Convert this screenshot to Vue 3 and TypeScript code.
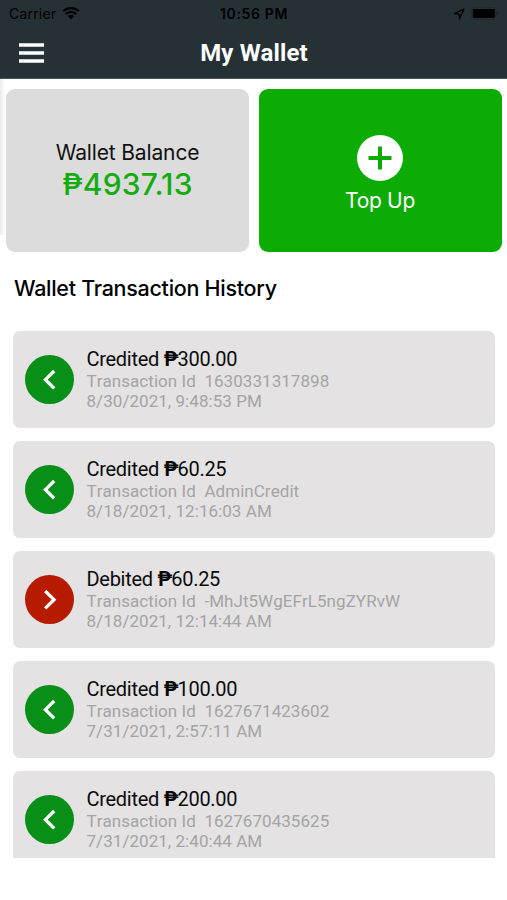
<script setup lang="ts">
type Kind = 'Credited' | 'Debited'

interface Transaction {
  kind: Kind
  amount: string
  id: string
  date: string
}

const balance = '4937.13'

const transactions: Transaction[] = [
  { kind: 'Credited', amount: '300.00', id: '1630331317898', date: '8/30/2021, 9:48:53 PM' },
  { kind: 'Credited', amount: '60.25', id: 'AdminCredit', date: '8/18/2021, 12:16:03 AM' },
  { kind: 'Debited', amount: '60.25', id: '-MhJt5WgEFrL5ngZYRvW', date: '8/18/2021, 12:14:44 AM' },
  { kind: 'Credited', amount: '100.00', id: '1627671423602', date: '7/31/2021, 2:57:11 AM' },
  { kind: 'Credited', amount: '200.00', id: '1627670435625', date: '7/31/2021, 2:40:44 AM' },
]
</script>

<template>
  <div class="screen">
    <header class="header">
      <div class="status">
        <div class="status-left">
          <span class="carrier">Carrier</span>
          <svg class="wifi" width="18" height="14" viewBox="0 0 18 14">
            <path d="M1.2 5.2A11.2 11.2 0 0 1 16.8 5.2M3.9 8.1A7.3 7.3 0 0 1 14.1 8.1" fill="none" stroke="#000" stroke-width="2.2" />
            <path d="M5.9 10.1A4.5 4.5 0 0 1 12.1 10.1L9 13.3Z" fill="#000" />
          </svg>
        </div>
        <span class="clock">10:56 PM</span>
        <div class="status-right">
          <svg width="12" height="12" viewBox="0 0 12 12">
            <path d="M10.9 1.1L1.3 5.6L6 6.1L6.5 10.8Z" fill="none" stroke="#000" stroke-width="1.4" stroke-linejoin="round" />
          </svg>
          <svg width="28" height="13" viewBox="0 0 28 13">
            <rect x="0.5" y="0.5" width="24.5" height="12" rx="3.2" fill="none" stroke="#1f292d" />
            <rect x="1.8" y="2" width="22" height="9" rx="1.6" fill="#000" />
            <path d="M26 4.5Q28 6.5 26 8.5Z" fill="#172024" />
          </svg>
        </div>
      </div>
      <div class="nav">
        <svg class="menu" width="25" height="20" viewBox="0 0 25 20">
          <path d="M0 2H25M0 10H25M0 18H25" stroke="#fff" stroke-width="3.6" />
        </svg>
        <h1 class="title">My Wallet</h1>
      </div>
    </header>

    <section class="cards">
      <div class="card balance">
        <span class="balance-label">Wallet Balance</span>
        <span class="balance-value">₱{{ balance }}</span>
      </div>
      <div class="card topup">
        <svg width="46" height="46" viewBox="0 0 46 46">
          <circle cx="23" cy="23" r="23" fill="#fff" />
          <path d="M23 11.5V34.5M11.5 23H34.5" stroke="#0dac04" stroke-width="4" />
        </svg>
        <span class="topup-label">Top Up</span>
      </div>
    </section>

    <h2 class="heading">Wallet Transaction History</h2>

    <ul class="list">
      <li v-for="tx in transactions" :key="tx.id" class="row">
        <svg class="badge" :class="{ debit: tx.kind === 'Debited' }" width="49" height="49" viewBox="0 0 49 49">
          <circle cx="24.5" cy="24.5" r="24.5" />
          <path v-if="tx.kind === 'Credited'" d="M29.2 16L20.4 24.7L29.2 33.4" />
          <path v-else d="M20.2 16L29 24.7L20.2 33.4" />
        </svg>
        <div class="details">
          <span class="amount">{{ tx.kind }} <span class="peso">₱</span>{{ tx.amount }}</span>
          <span class="meta">Transaction Id&nbsp; {{ tx.id }}</span>
          <span class="meta">{{ tx.date }}</span>
        </div>
      </li>
    </ul>
  </div>
</template>

<style>
body {
  margin: 0;
  background: #fff;
}
</style>

<style scoped>
.screen {
  width: 507px;
  height: 900px;
  overflow: hidden;
  background: #fff;
  display: flex;
  flex-direction: column;
  font-family: Roboto, "Liberation Sans", sans-serif;
}
.header {
  box-sizing: border-box;
  height: 79px;
  flex: none;
  background: #263136;
  border-bottom: 1px solid #465155;
}
.status {
  display: grid;
  grid-template-columns: 1fr auto 1fr;
  align-items: center;
  height: 27px;
  padding: 0 8px 0 9px;
  font: 14px/27px Inter, "Liberation Sans", sans-serif;
  color: #000;
}
.status-left,
.status-right {
  display: flex;
  align-items: center;
}
.status-left {
  gap: 6px;
}
.carrier {
  letter-spacing: 0.2px;
}
.wifi {
  margin-top: -2px;
}
.status-right {
  justify-content: flex-end;
  gap: 6px;
}
.clock {
  font-weight: 600;
  letter-spacing: 0.65px;
}
.nav {
  display: grid;
  grid-template-columns: 25px 1fr 25px;
  align-items: center;
  height: 51px;
  padding: 0 19px;
}
.title {
  margin: 0;
  padding: 2px 0 0 1px;
  font-size: 24px;
  line-height: 49px;
  font-weight: 700;
  letter-spacing: 0.15px;
  text-align: center;
  color: #fff;
}
.cards {
  display: grid;
  grid-template-columns: 1fr 1fr;
  gap: 10px;
  height: 163px;
  padding: 10px 5px 0 6px;
  flex: none;
  background: linear-gradient(to right, #e9eaea, #fff) 0 0 / 5px 156px no-repeat;
}
.card {
  border-radius: 9px;
  display: flex;
  flex-direction: column;
  align-items: center;
  justify-content: center;
  font-family: Inter, "Liberation Sans", sans-serif;
}
.balance {
  padding-bottom: 2px;
  background: #dcdcdc;
}
.balance-label {
  font-size: 21px;
  line-height: 28px;
  letter-spacing: -0.14px;
  color: #111;
}
.balance-value {
  font-size: 30px;
  line-height: 34px;
  font-weight: 500;
  letter-spacing: 0.2px;
  color: #14ac10;
}
.topup {
  padding: 8px 1px 0 0;
  background: #0dac04;
}
.topup-label {
  font-size: 21px;
  line-height: 28px;
  letter-spacing: -0.3px;
  margin-top: 6px;
  color: #fff;
}
.heading {
  margin: 19px 0 0 14px;
  flex: none;
  font: 500 21.5px/34px Inter, "Liberation Sans", sans-serif;
  letter-spacing: -0.28px;
  color: #000;
}
.list {
  list-style: none;
  margin: 26px 12px 0 13px;
  padding: 0;
  height: 527px;
  flex: none;
  overflow: hidden;
  display: flex;
  flex-direction: column;
  gap: 13px;
}
.row {
  box-sizing: border-box;
  height: 97px;
  flex: none;
  display: flex;
  align-items: center;
  gap: 12.5px;
  padding: 0 12px;
  border-radius: 7px;
  background: #e4e2e3;
}
.badge {
  flex: none;
  fill: #078f18;
}
.badge.debit {
  fill: #b61b00;
}
.badge path {
  fill: none;
  stroke: #fff;
  stroke-width: 3.3;
}
.details {
  display: flex;
  flex-direction: column;
  white-space: nowrap;
}
.amount {
  font-size: 20px;
  line-height: 23px;
  letter-spacing: -0.28px;
  color: #0a0a0a;
}
.peso {
  font-weight: 700;
  letter-spacing: -1.2px;
}
.meta {
  font-size: 17px;
  line-height: 20px;
  letter-spacing: 0.05px;
  font-kerning: none;
  color: #a5a4a5;
}
</style>
